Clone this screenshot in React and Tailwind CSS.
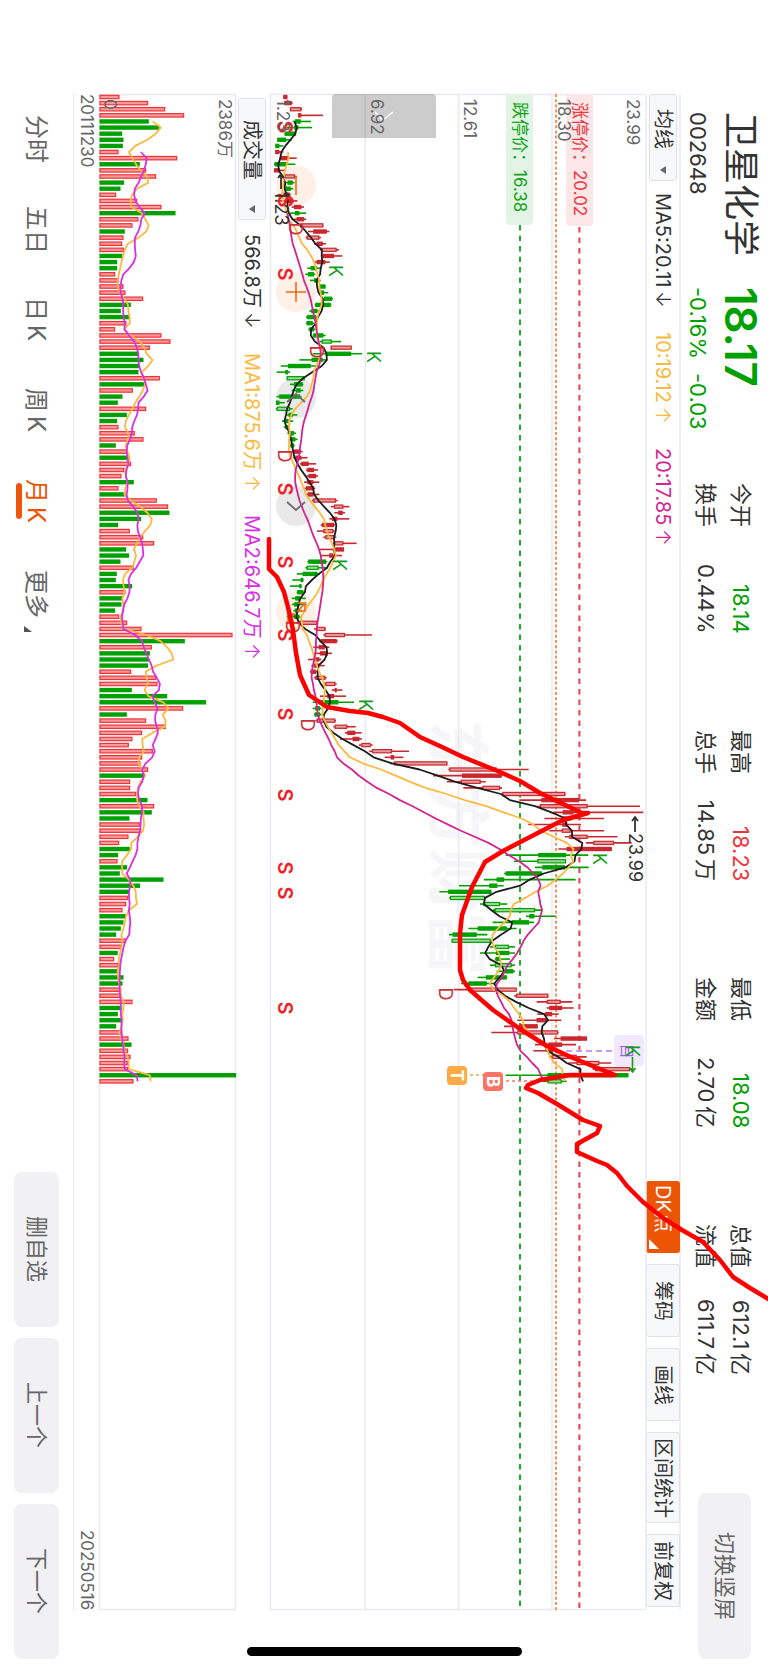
import React from "react";

const GREEN = "#00a000";
const RED = "#c9282e";
const PITCH = 6.114;
const FIRST_Y = 97;
const rowY = (i) => FIRST_Y + PITCH * i;

// Monthly volume, oldest first: direction letter followed by bar length in thirds of a unit.
const VOLUME =
  "r59 r145 r196 r253 g148 g180 g68 g72 g70 r56 r232 g121 r139 r169 g74 g63 r49 r112 r185 g228 r116 r98 g76 r71 r67 r72 g69 g53 g53 r46 r57 r71 r77 r130 g94 g64 g90 r80 r46 r185 r212 r150 g118 g132 g121 g117 r180 g136 r99 g69 g55 r139 g82 g53 r56 r105 r131 g49 r82 g87 r94 r73 r65 g103 r56 g78 r171 r205 g210 g125 g56 r90 r130 r163 g80 g89 g63 r102 g52 g49 g98 r77 g70 g66 g47 r58 r82 r125 r398 g256 r156 g151 g149 g146 r94 r169 r173 g97 g203 g320 r250 g82 r139 r198 r127 r98 r87 r159 r127 r122 r145 g132 r91 r91 r109 g144 r163 g157 g90 r120 r124 r86 r58 g91 g56 r53 g83 g61 g192 g122 g90 r84 r79 r68 g79 g72 g64 g50 r79 r64 g55 r43 r56 g57 g72 g69 r64 r64 r98 g66 g55 g67 g50 r64 r86 g96 r85 r92 r84 r85 g410 r101"
    .split(" ")
    .map((t) => ({ up: t[0] === "r", v: Number(t.slice(1)) / 3 }));

// Candles: body low, body high, wick low, wick high.
// The letter gives the colour; upper case is an outlined body, which closes at its high end.
const LOW_RANGE =
  "r130,142,130,142 R133,155,133,158 R150,184,150,186 R174,184,174,249 g165,182,158,213 g163,175,140,216 g134,168,134,168 g112,138,112,155 g106,118,106,130 r106,118,106,130 R122,146,122,170 g104,140,102,166 R102,120,102,136 R133,165,115,170 g143,158,133,164 g138,152,134,160 r130,150,112,152 r138,160,112,172 r162,184,155,192 g165,178,150,198 R170,192,160,198 R180,250,178,250 r220,260,204,268 R200,238,197,243 r230,248,222,258 R244,290,240,297 r248,282,246,307 r230,256,222,269 g212,230,202,244 G204,222,196,226 G222,236,210,242 G240,256,236,258 G240,252,234,265 G252,276,250,279 g226,272,224,274 g214,232,208,240 g202,228,198,232 G200,218,198,222 g208,222,205,226 g220,250,218,257 G245,275,240,303 R272,335,272,335 g258,333,218,366 g215,248,178,258 g144,212,122,235 g136,144,110,150 G140,194,140,194 g162,188,150,190 g168,182,155,190 g118,180,110,185 g108,118,108,134 G110,150,108,158 g146,158,140,172 G136,146,126,160 G136,146,131,150 G146,162,142,168 G152,166,150,173 G152,162,148,164 r162,182,155,188 r166,184,160,203 R184,206,180,228 R202,222,198,234 R206,228,200,234 R202,220,192,238 R198,222,194,226 R204,220,198,238 R220,288,216,293 R282,310,272,328 R295,308,283,315 R276,292,268,328 r246,282,242,285 R250,280,231,284 R256,285,250,289 R283,310,280,350 r286,312,238,312 r268,280,243,306 g205,258,202,262 G200,236,196,262 g188,232,170,240 g182,190,157,190 g178,184,150,186 G172,190,170,196 g166,180,155,197 g162,178,155,200 g165,176,160,185 g162,178,140,182 R178,232,170,234 R230,256,222,258 R254,315,250,396 r242,290,238,293 R236,254,220,268 r240,264,222,276 r220,238,204,244 r222,238,214,254 R212,228,210,240 R226,256,222,260 R256,286,252,290 R284,290,275,307 R262,282,240,318 g236,295,218,342 g226,240,218,244 g224,240,222,245 R230,286,226,288 R284,322,280,347 R322,346,315,365 R338,358,300,366 R364,392,357,398 R396,456,388,507 r452,462,434,490 R462,622,450,622";
const HIGH_RANGE =
  "R148,290,145,386 r186,305,100,307 R182,242,141,257 R247,300,190,306 R307,496,305,496 r424,537,358,558 R420,563,415,720 r488,520,460,730 R490,515,433,612 R487,502,385,543 R485,512,448,612 R508,563,495,652 R580,642,558,695 r500,635,475,635 g415,498,317,565 G412,498,342,498 g427,495,405,566 g317,425,312,428 g290,312,252,527 g268,292,177,311 g145,274,118,274 G150,255,148,257 G250,300,240,322 G284,405,278,428 g388,403,378,466 g335,387,278,402 g233,320,205,350 g158,230,147,262 G155,272,155,280 G285,327,270,345 g288,328,240,345 G287,300,285,330 G285,335,270,345 g315,340,290,345 g258,320,233,322 g205,260,183,287 R210,350,162,350 R348,445,342,445 R440,482,410,517 r448,486,440,521 r436,456,412,476 r410,440,352,484 r358,413,312,413 R352,474,274,476 r482,561,462,561 r445,486,405,528 r445,458,400,468 R455,530,448,560 R530,598,505,634 R585,690,578,700 g443,685,317,685 G443,485,430,500";

const parseCandles = (text, base) =>
  text.split(" ").map((t) => {
    const [lo, hi, min, max] = t
      .slice(1)
      .split(",")
      .map((n) => base + Number(n) / 3);
    const kind = t[0];
    const outlined = kind === kind.toUpperCase();
    return { up: kind.toLowerCase() === "r", outlined, lo, hi, min, max, close: outlined ? hi : lo };
  });

const CANDLES = [...parseCandles(LOW_RANGE, 240), ...parseCandles(HIGH_RANGE, 400)];

function averageLine(values, span) {
  const points = [];
  for (let i = span - 1; i < values.length; i++) {
    let sum = 0;
    for (let k = i - span + 1; k <= i; k++) sum += values[k];
    points.push(`${(sum / span).toFixed(1)},${rowY(i).toFixed(1)}`);
  }
  return points.join(" ");
}

const closes = CANDLES.map((c) => c.close);
const volumeEnds = VOLUME.map((b) => 99.3 + b.v);

const ANNOTATION =
  "269,539 269,569 277,577 284,592 288,607 293,630 296,653 300,675 309,695 327,707 350,711 368,713 383,717 400,723 420,737 442,747 463,757 500,772 520,781 540,793 582,813 588,813 563,820 530,837 503,851 485,862 472,887 462,915 460,933 460,970 463,980 470,990 493,1010 520,1029 547,1046 573,1058 600,1069 615,1075 570,1075 540,1080 528,1085 526,1088 538,1093 557,1104 570,1112 583,1120 600,1126 597,1133 577,1144 577,1152 597,1161 607,1165 617,1173 627,1186 643,1202 663,1218 682,1230 703,1242 720,1260 733,1277 750,1288 770,1300";

function Mark({ x, y, color, size = 20, weight = 400, children, anchor = "middle" }) {
  return (
    <text
      transform={`translate(${x} ${y}) rotate(90)`}
      textAnchor={anchor}
      dy="0.36em"
      fill={color}
      fontSize={size}
      fontWeight={weight}
    >
      {children}
    </text>
  );
}

function PriceChart() {
  return (
    <svg
      className="absolute inset-0 h-full w-full overflow-visible [writing-mode:horizontal-tb]"
      viewBox="270 94 376 1516"
      preserveAspectRatio="none"
      role="img"
      aria-label="月K线图"
    >
      <Mark x={458} y={720} color="#f6f6f8" size={64} weight={700} anchor="start">
        东方财富
      </Mark>
      <g stroke="#e9e9f1" strokeWidth="1.5" fill="none">
        <rect x="270.5" y="94.5" width="375.5" height="1515" />
        <path d="M365.3 94V1610M458.6 94V1610M552 94V1610" />
      </g>

      <g fill="#feefe7">
        <circle cx="296" cy="185.5" r="20" />
        <circle cx="296" cy="292" r="20" />
        <circle cx="296" cy="612" r="20" />
      </g>
      <g fill="#e9e9ea">
        <circle cx="296" cy="398" r="20" />
        <circle cx="296" cy="506" r="20" />
      </g>

      <path d="M556 94V1610" stroke="#f7925a" strokeWidth="2" strokeDasharray="3 2.2" />
      <path d="M520 225V1610" stroke="#27ab2c" strokeWidth="2" strokeDasharray="5.5 5" />
      <path d="M579.4 227V1610" stroke="#e8414a" strokeWidth="2" strokeDasharray="5.5 5" />

      {CANDLES.map((c, i) => {
        const color = c.up ? RED : GREEN;
        const y = rowY(i);
        const hollow = c.outlined && c.hi - c.lo > 8;
        return (
          <g key={i} stroke={color}>
            <path d={`M${c.min} ${y}H${c.max}`} strokeWidth="1.6" />
            <rect
              x={c.lo + 0.5}
              y={y - 1.6}
              width={Math.max(c.hi - c.lo - 1, 1)}
              height="3.2"
              strokeWidth="1.2"
              fill={hollow ? (c.up ? "#e29a9c" : "#9bd69b") : color}
            />
          </g>
        );
      })}

      <g fill="none" strokeWidth="1.8" strokeLinejoin="round">
        <polyline points={averageLine(closes, 5)} stroke="#1d1d1d" />
        <polyline points={averageLine(closes, 10)} stroke="#fcb941" />
        <polyline points={averageLine(closes, 20)} stroke="#d4248f" />
      </g>

      <g fill="none" stroke="#ee6a1c" strokeWidth="1.6">
        <path d="M296 176V195" />
        <path d="M296 282V302M286 292H306" />
        <path d="M298 603H305L298 611H305V604M294 621H288L294 614H288V621" />
      </g>
      <g fill="none" stroke="#6d6d6d" strokeWidth="1.8">
        <path d="M287 402L296 394L305 402" />
        <path d="M287 502L296 510L305 502" />
      </g>

      <path d="M332 138V98Q332 94 336 94H432Q436 94 436 98V138Z" fill="#000" fillOpacity="0.2" />
      <path d="M375 112L383 120L393 112" fill="none" stroke="#fff" strokeWidth="1.6" />

      {[127, 201, 274, 489, 562, 635, 714, 795, 868, 893, 1008].map((y) => (
        <Mark key={y} x={285} y={y} color="#f01f28" weight={600}>
          S
        </Mark>
      ))}
      {[
        [295, 229],
        [316, 352],
        [284, 456],
        [292, 627],
        [307, 725],
        [445, 994],
      ].map(([x, y]) => (
        <Mark key={y} x={x} y={y} color="#cc2f35" size={18}>
          D
        </Mark>
      ))}

      <path d="M566 1051H614" stroke="#c39bff" strokeWidth="2" strokeDasharray="6 4" />
      <rect x="614" y="1035" width="30" height="31" rx="4" fill="#f1e8fd" />
      <Mark x={627} y={1051} color="#9a5cf5" size={15}>
        自
      </Mark>

      {[
        [335, 271],
        [373, 357],
        [339, 565],
        [365, 705],
        [599, 859],
        [632, 1051],
      ].map(([x, y]) => (
        <Mark key={y} x={x} y={y} color="#129c1a" size={18}>
          K
        </Mark>
      ))}
      <path d="M632.5 1057V1071M629.5 1068L632.5 1072L635.5 1068" fill="none" stroke="#129c1a" strokeWidth="1.6" />

      <path d="M470 1075H504" stroke="#fba53a" strokeWidth="1.6" strokeDasharray="3 3" />
      <path d="M506 1081H540" stroke="#fd7366" strokeWidth="1.6" strokeDasharray="3 3" />
      <rect x="447" y="1066" width="20" height="19" rx="4" fill="#fdaa42" />
      <Mark x={457} y={1075.5} color="#fff" size={17} weight={700}>
        T
      </Mark>
      <rect x="483" y="1072" width="20" height="19" rx="4" fill="#fd7366" />
      <Mark x={493} y={1081.5} color="#fff" size={17} weight={700}>
        B
      </Mark>

      <path d="M635 832V818M632 821L635 817L638 821" fill="none" stroke="#333" strokeWidth="1.8" />
      <Mark x={635} y={833} color="#333" size={18} anchor="start">
        23.99
      </Mark>
      <path d="M281 189V175M278 178L281 174L284 178" fill="none" stroke="#333" strokeWidth="1.8" />
      <Mark x={281} y={191} color="#333" size={18} anchor="start">
        1.23
      </Mark>
    </svg>
  );
}

function VolumeChart() {
  return (
    <svg
      className="absolute inset-0 h-full w-full overflow-visible"
      viewBox="99 94 137 1516"
      preserveAspectRatio="none"
      role="img"
      aria-label="成交量图"
    >
      <rect x="99.5" y="94.5" width="136" height="1515" fill="none" stroke="#e9e9ee" strokeWidth="1.5" />
      {VOLUME.map((b, i) =>
        b.up ? (
          <rect key={i} x="100" y={rowY(i) - 1.7} width={b.v - 0.7} height="3.4" fill="#f49a9a" stroke="#ef3339" strokeWidth="1.2" />
        ) : (
          <rect key={i} x="99.5" y={rowY(i) - 2.2} width={b.v} height="4.4" fill={GREEN} />
        )
      )}
      <g fill="none" strokeWidth="1.8" strokeLinejoin="round">
        <polyline points={averageLine(volumeEnds, 5)} stroke="#fcb941" />
        <polyline points={averageLine(volumeEnds, 10)} stroke="#d930e6" />
      </g>
    </svg>
  );
}

function Caret() {
  return (
    <svg className="h-2 w-1.5" viewBox="0 0 6 8" aria-hidden="true">
      <path d="M0 4L6 0V8Z" fill="#666" />
    </svg>
  );
}

function Reading({ arrow, tone = "text-[#333]", children }) {
  return (
    <span className={`flex gap-1 ${tone}`}>
      {children}
      <span className="font-light">{arrow}</span>
    </span>
  );
}

const QUOTES = [
  [["今开", "18.14", "", "text-[#00a000]"], ["换手", "0.44%", "", "text-[#333]"]],
  [["最高", "18.23", "", "text-[#f0353a]"], ["总手", "14.85", "万", "text-[#333]"]],
  [["最低", "18.08", "", "text-[#00a000]"], ["金额", "2.70", "亿", "text-[#333]"]],
  [["总值", "612.1", "亿", "text-[#333]"], ["流值", "611.7", "亿", "text-[#333]"]],
];

const PERIODS = [
  ["分时", ""],
  ["五日", ""],
  ["日", "K"],
  ["周", "K"],
  ["月", "K"],
  ["更多", ""],
];
const TOOLS = ["筹码", "画线", "区间统计", "前复权"];
const ACTIONS = ["删自选", "上一个", "下一个"];

const AXIS = "absolute top-[5px] text-[17px] leading-5 text-[#666]";
const CHIP =
  "flex items-center rounded-[3px] border border-[#e0e1e8] bg-[#f7f8fa] text-xl leading-6 text-[#333]";
const SOFT = "flex items-center justify-center rounded-lg bg-[#f1f1f4] text-[22px] leading-7 text-[#666]";

export default function App() {
  return (
    <main className="relative flex h-screen w-full flex-col overflow-hidden bg-white font-['Inter','Noto_Sans_CJK_SC',sans-serif] text-[#333] [text-orientation:sideways] [writing-mode:vertical-rl]">
      <header className="flex w-[87px] shrink-0 items-start pt-28">
        <div className="h-[175px]">
          <h1 className="text-4xl leading-[54px]">卫星化学</h1>
          <p className="text-[22px] leading-8">002648</p>
        </div>
        <div className="h-[196px] text-[#00a000]">
          <p className="text-[44px] leading-[54px] font-semibold">18.17</p>
          <p className="flex gap-3.5 text-[22px] leading-8">
            <span>-0.16%</span>
            <span>-0.03</span>
          </p>
        </div>
        <div className="mr-2.5 flex gap-24 text-[22px] leading-[35px]">
          {QUOTES.map((group) => (
            <dl key={group[0][0]} className="h-[151px]">
              {group.map(([label, value, unit, tone]) => (
                <div key={label} className="flex justify-between whitespace-nowrap">
                  <dt>{label}</dt>
                  <dd className={`flex gap-1 ${tone}`}>
                    {value}
                    {unit && <span>{unit}</span>}
                  </dd>
                </div>
              ))}
            </dl>
          ))}
        </div>
        <button type="button" className={`${SOFT} mt-auto mr-[17px] mb-[11px] h-[166px] w-[53px] [writing-mode:vertical-rl]`}>
          切换竖屏
        </button>
      </header>

      <section className="mt-[94px] mb-[60px] flex w-[35px] shrink-0 items-center border-r-2 border-[#efeff3] text-xl leading-7">
        <button type="button" className={`${CHIP} h-[87px] w-7 justify-between pt-3.5 pb-1.5 [writing-mode:vertical-rl]`}>
          均线
          <Caret />
        </button>
        <p className="mt-3 flex gap-6 whitespace-nowrap">
          <Reading arrow="↓">MA5:20.11</Reading>
          <Reading arrow="↑" tone="text-[#fcb941]">
            10:19.12
          </Reading>
          <Reading arrow="↑" tone="text-[#d4248f]">
            20:17.85
          </Reading>
        </p>
        <div className="mt-auto mb-[3px] flex gap-[11px]">
          <button
            type="button"
            className="relative flex h-[72px] w-[34px] items-center rounded-[3px] bg-[#ec5504] pt-1 text-xl leading-6 whitespace-nowrap text-white [writing-mode:vertical-rl]"
          >
            DK点
            <svg className="absolute bottom-1 left-[3px] h-2.5 w-2.5" viewBox="0 0 10 10" aria-hidden="true">
              <path d="M0 0V10H10Z" fill="#fff" />
            </svg>
          </button>
          {TOOLS.map((tool) => (
            <button
              key={tool}
              type="button"
              className={`${CHIP} w-[34px] justify-center whitespace-nowrap [writing-mode:vertical-rl] ${tool.length > 3 ? "h-[91px]" : "h-[73px]"}`}
            >
              {tool}
            </button>
          ))}
        </div>
      </section>

      <section className="relative mt-[94px] mb-[60px] min-w-0 flex-[376_1_0%]">
        <PriceChart />
        <span className={`${AXIS} left-[353px]`}>23.99</span>
        <span className="absolute top-0 left-[296px] h-[132px] w-[27px] rounded-sm bg-[#fde6e7] pt-2 text-[17px] leading-[27px] whitespace-nowrap text-[#ec343c]">
          涨停价：20.02
        </span>
        <span className="absolute top-0 left-[236px] h-[131px] w-[27px] rounded-sm bg-[#e2f4e3] pt-2 text-[17px] leading-[27px] whitespace-nowrap text-[#13a31a]">
          跌停价：16.38
        </span>
        <span className={`${AXIS} left-[284px]`}>18.30</span>
        <span className={`${AXIS} left-[190px]`}>12.61</span>
        <span className={`${AXIS} left-[97px]`}>6.92</span>
        <span className={`${AXIS} left-[3px]`}>1.23</span>
      </section>

      <section className="mt-[94px] mb-[60px] flex w-[34px] shrink-0 items-center pr-0.5 text-xl leading-7">
        <button type="button" className={`${CHIP} mt-1 h-[122px] w-7 justify-between pt-[21px] pb-1.5 [writing-mode:vertical-rl]`}>
          成交量
          <Caret />
        </button>
        <p className="mt-3.5 flex gap-6 whitespace-nowrap">
          <Reading arrow="↓">566.8万</Reading>
          <Reading arrow="↑" tone="text-[#fcb941]">
            MA1:875.6万
          </Reading>
          <Reading arrow="↑" tone="text-[#d930e6]">
            MA2:646.7万
          </Reading>
        </p>
      </section>

      <section className="relative mt-[94px] mb-[60px] min-w-0 flex-[137_1_0%]">
        <VolumeChart />
        <span className={`${AXIS} left-[116px]`}>2386万</span>
        <span className={`${AXIS} left-px`}>0</span>
      </section>

      <div className="mt-[94px] mb-[60px] flex w-[26px] shrink-0 justify-between border-l border-[#e6e6ea] text-[17px] leading-6 text-[#666]">
        <time dateTime="2011-12-30">20111230</time>
        <time dateTime="2025-05-16">20250516</time>
      </div>

      <footer className="flex w-[73px] shrink-0 items-center justify-between pt-[115px] pb-[11px]">
        <nav className="mr-0.5 flex text-2xl leading-8 text-[#666]">
          {PERIODS.map(([name, suffix]) => {
            const active = name === "月";
            return (
              <a
                key={name}
                href="#"
                aria-current={active ? "page" : undefined}
                className={`relative flex h-[91px] gap-1 whitespace-nowrap ${active ? "text-[#ec5504]" : ""}`}
              >
                {name}
                {suffix && <span>{suffix}</span>}
                {active && <span className="absolute top-1 -left-1 h-9 w-1.5 rounded-full bg-[#f0560a]" />}
                {name === "更多" && (
                  <svg className="absolute top-14 left-1 h-1.5 w-2" viewBox="0 0 8 6" aria-hidden="true">
                    <path d="M0 0V6H8Z" fill="#555" />
                  </svg>
                )}
              </a>
            );
          })}
        </nav>
        <div className="flex gap-[11px]">
          {ACTIONS.map((action) => (
            <button key={action} type="button" className={`${SOFT} h-[155px] w-[45px] [writing-mode:vertical-rl]`}>
              {action}
            </button>
          ))}
        </div>
      </footer>

      <svg
        className="pointer-events-none absolute inset-0 h-full w-full"
        viewBox="0 0 768 1670"
        preserveAspectRatio="none"
        aria-hidden="true"
      >
        <polyline points={ANNOTATION} fill="none" stroke="#fd0000" strokeWidth="4.5" strokeLinejoin="round" strokeLinecap="round" />
      </svg>
      <div className="absolute bottom-3.5 left-[247px] h-[9px] w-[275px] rounded-full bg-black" />
    </main>
  );
}
